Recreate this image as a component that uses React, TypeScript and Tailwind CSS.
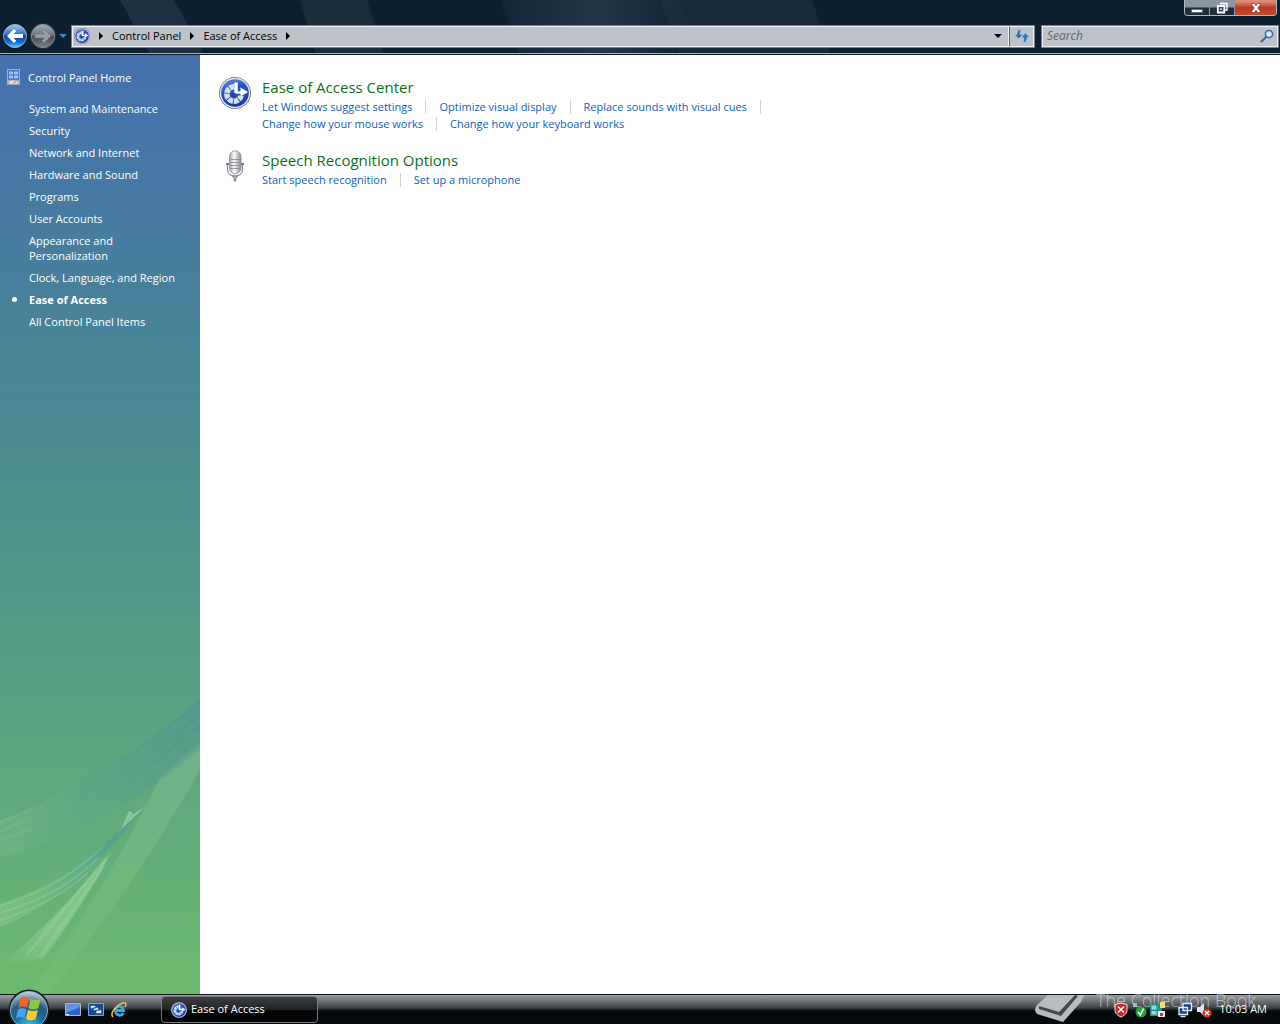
import React from 'react';

const sidebarItems = [
  'System and Maintenance',
  'Security',
  'Network and Internet',
  'Hardware and Sound',
  'Programs',
  'User Accounts',
  'Appearance and Personalization',
  'Clock, Language, and Region',
  'Ease of Access',
  'All Control Panel Items',
];

const EaseIcon: React.FC<{ className: string }> = ({ className }) => (
  <svg viewBox="0 0 32 32" className={className} aria-hidden="true">
    <defs>
      <linearGradient id="easeBall" x1="0" y1="0" x2="0.3" y2="1">
        <stop offset="0" stopColor="#6288e0" />
        <stop offset="0.45" stopColor="#2f55c4" />
        <stop offset="1" stopColor="#1d3aa4" />
      </linearGradient>
    </defs>
    <circle cx="16" cy="16" r="16" fill="#6d7280" />
    <circle cx="16" cy="16" r="15.2" fill="#dfe3ec" />
    <circle cx="16" cy="16" r="13.8" fill="url(#easeBall)" />
    {/* dial segments */}
    <circle cx="15" cy="17" r="7.2" fill="none" stroke="#cfe2f0" strokeWidth="5.6" strokeDasharray="4.8 0.855" transform="rotate(8 15 17)" />
    <path d="M15 17V5l8 2 5 4v7l-6 1z" fill="#2c51bf" />
    {/* hands */}
    <path d="M15.2 5.5h3.6v8.7h2.7v-3.6l7.5 4.4-7.5 4.5v-2.8h-5.2l-1.1-1z" fill="#fff" />
    <circle cx="14.6" cy="18" r="2.4" fill="#2447ad" />
  </svg>
);

const MicIcon: React.FC = () => (
  <svg viewBox="0 0 32 32" className="size-8" aria-hidden="true">
    <defs>
      <linearGradient id="micBody" x1="0" x2="1">
        <stop offset="0" stopColor="#a3a3ae" />
        <stop offset="0.4" stopColor="#fcfcff" />
        <stop offset="1" stopColor="#8b8b98" />
      </linearGradient>
    </defs>
    <path d="M8.5 13v6.5c0 4 3 6.500 7.500 6.500s7.500-2.500 7.500-6.500V13" fill="none" stroke="#8b8b97" strokeWidth="1.2" />
    <path d="M7 14h3M22 14h3" stroke="#5f5f6b" strokeWidth="1.5" />
    <path d="M13.5 26h5l-1.5 2v3h-2v-3z" fill="#b9b9c5" stroke="#6b6b78" strokeWidth=".7" />
    <rect x="10.5" y="0.8" width="11.5" height="23" rx="5.7" fill="url(#micBody)" stroke="#8b8b97" strokeWidth=".8" />
    <path d="M11 9.5h10M11 12.5h10M11 15.5h10M11 18.5h10" stroke="#85858f" strokeWidth=".8" />
  </svg>
);

const NavOrbs: React.FC = () => (
  <div className="flex items-center">
    <button aria-label="Back" className="flex size-7 items-center justify-center">
      <svg viewBox="0 0 28 28" className="size-7">
        <defs>
          <linearGradient id="backOrb" x1="0" y1="0" x2="0" y2="1">
            <stop offset="0" stopColor="#a9c6ef" />
            <stop offset="0.45" stopColor="#2f6cc4" />
            <stop offset="0.5" stopColor="#0d3f9a" />
            <stop offset="0.8" stopColor="#1c74d8" />
            <stop offset="1" stopColor="#5fd3fa" />
          </linearGradient>
        </defs>
        <circle cx="14" cy="14" r="13" fill="#0a1522" />
        <circle cx="14" cy="14" r="11.6" fill="url(#backOrb)" stroke="#a5b9d6" strokeWidth=".8" />
        <path d="M6 14l7-7 2.200 2.200L12.500 12H22v4h-9.500l2.700 2.800L13 21z" fill="#fff" />
      </svg>
    </button>
    <button aria-label="Forward" className="flex size-7 items-center justify-center">
      <svg viewBox="0 0 28 28" className="size-7">
        <defs>
          <linearGradient id="forwardOrb" x1="0" y1="0" x2="0" y2="1">
            <stop offset="0" stopColor="#a8adb4" />
            <stop offset="0.48" stopColor="#6c747c" />
            <stop offset="0.52" stopColor="#424b54" />
            <stop offset="1" stopColor="#77818a" />
          </linearGradient>
        </defs>
        <circle cx="14" cy="14" r="13" fill="#26323e" />
        <circle cx="14" cy="14" r="11.6" fill="url(#forwardOrb)" stroke="#8c959e" strokeWidth=".8" />
        <path d="M22 14l-7-7-2.200 2.200 2.700 2.800H6v4h9.500l-2.700 2.800L15 21z" fill="#98a0a6" stroke="#6d757c" strokeWidth=".6" />
      </svg>
    </button>
    <button aria-label="Recent pages" className="flex h-7 w-3 items-center justify-center">
      <svg viewBox="0 0 8 4" className="h-1 w-2"><path d="M0 0h8L4 4z" fill="#3f8bd0" /></svg>
    </button>
  </div>
);

const Crumb: React.FC = () => (
  <svg viewBox="0 0 4 8" className="mx-[9px] h-2 w-1 shrink-0" aria-hidden="true"><path d="M0 0l4 4-4 4z" fill="#000" /></svg>
);

const WindowButtons: React.FC = () => (
  <div className="mr-[3px] flex h-4 overflow-hidden rounded-b border border-t-0 border-[#aeb8c2]">
    <button aria-label="Minimize" className="flex w-[25px] items-center justify-center border-r border-[#8d99a5] bg-linear-to-b from-[#8b96a2] from-45% to-[#1f2c3a] to-55%">
      <svg viewBox="0 0 12 12" className="mt-1 size-3"><path d="M.5 5.5h11v3H.5z" fill="#fff" stroke="#465260" strokeWidth=".6" /></svg>
    </button>
    <button aria-label="Restore" className="flex w-[25px] items-center justify-center border-r border-[#8d99a5] bg-linear-to-b from-[#8b96a2] from-45% to-[#1f2c3a] to-55%">
      <svg viewBox="0 0 12 12" className="size-3">
        <path d="M4 1.5h7V8H8.500" fill="none" stroke="#fff" strokeWidth="1.4" />
        <path d="M1.8 4h6.500v6.500H1.800z" fill="#3c4856" stroke="#fff" strokeWidth="1.8" />
        <path d="M4.3 6.5h1.600v1.600H4.300z" fill="#fff" />
      </svg>
    </button>
    <button aria-label="Close" className="flex w-[41px] items-center justify-center bg-linear-to-b from-[#dc8a7a] from-10% via-[#bd3a22] via-50% to-[#c4492d]">
      <svg viewBox="0 0 12 12" className="size-3"><path d="M1 1.5h3.300L6 3.700l1.700-2.200H11L7.900 6l3.100 4.500H7.700L6 8.300l-1.700 2.200H1L4.100 6z" fill="#fff" stroke="#63302a" strokeWidth=".6" /></svg>
    </button>
  </div>
);

const TitleBar: React.FC = () => (
  <header className="relative flex h-[55px] flex-col border-b border-[#0a1a28] bg-[#0c2031]">
    <svg viewBox="0 0 1280 54" preserveAspectRatio="none" className="absolute inset-0 size-full" aria-hidden="true">
      <defs>
        <linearGradient id="glassFade" x1="0" x2="1">
          <stop offset="0" stopColor="#33445a" stopOpacity=".15" />
          <stop offset=".5" stopColor="#33445a" stopOpacity=".6" />
          <stop offset="1" stopColor="#33445a" stopOpacity="0" />
        </linearGradient>
      </defs>
      <path d="M120 0h54l30 54h-54z" fill="#33445a" opacity=".45" />
      <path d="M300 0h67l17 54h-68z" fill="#26394a" opacity=".5" />
      <path d="M500 0h180l20 54H520z" fill="url(#glassFade)" />
      <path d="M660 0h68l20 54h-68zM728 0h84l18 54h-82z" fill="#26394a" opacity=".4" />
    </svg>
    <div className="relative flex justify-end"><WindowButtons /></div>
    <div className="relative flex items-center gap-[2px] px-px pt-[6px]">
      <NavOrbs />
      <nav aria-label="Address" className="flex h-[23px] flex-1 border border-[#76808a] bg-[#bdc3c9]">
        <div className="flex min-w-0 flex-1 items-center border border-white/80 pl-px text-[11px] text-black">
          <EaseIcon className="size-4 shrink-0" />
          <Crumb />
          <a href="#control-panel">Control Panel</a>
          <Crumb />
          <a href="#ease">Ease of Access</a>
          <Crumb />
          <button aria-label="Previous locations" className="ml-auto flex h-full w-5 items-center justify-center">
            <svg viewBox="0 0 8 4" className="h-1 w-2"><path d="M0 0h8L4 4z" fill="#00001c" /></svg>
          </button>
        </div>
        <button aria-label="Refresh" className="flex w-[25px] items-center justify-center border border-white/80 border-l-[#59646f]">
          <svg viewBox="0 0 16 16" className="size-4">
            <path d="M7 1C4 1.5 2.800 4 3 6.500H.5L4.600 11l4.200-4.500H6.300C6.200 4.500 6.200 2.800 7 1z" fill="#2f74b8" stroke="#e8f2fb" strokeWidth=".3" />
            <path d="M9 15c3-.5 4.200-3 4-5.500h2.500L11.400 5 7.200 9.500h2.500C9.800 11.500 9.800 13.200 9 15z" fill="#2f74b8" stroke="#e8f2fb" strokeWidth=".3" />
          </svg>
        </button>
      </nav>
      <label className="ml-1 flex h-[23px] w-[238px] items-center border border-[#76808a] bg-[#bdc3c9] pl-[5px] shadow-[inset_0_0_0_1px_#e9edf0]">
        <input aria-label="Search" placeholder="Search" className="min-w-0 flex-1 bg-transparent text-[12px] italic text-black outline-none placeholder:text-[#62686e]" />
        <svg viewBox="0 0 14 14" className="mr-1 size-[14px]"><circle cx="9" cy="5" r="3.6" fill="#dce8f4" stroke="#3569b5" strokeWidth="1.5" /><path d="M6.3 7.800L1.500 12.500" stroke="#3569b5" strokeWidth="2" strokeLinecap="round" /></svg>
      </label>
    </div>
    <div className="absolute inset-x-0 bottom-0 h-px bg-[#a9b3bb]" />
  </header>
);

const SidebarWaves: React.FC = () => (
  <svg viewBox="0 0 200 304" className="absolute bottom-0 left-0 w-full" aria-hidden="true">
    <defs>
      <linearGradient id="upperSwoosh" x1="0" x2="1">
        <stop offset="0" stopColor="#8fd0a0" stopOpacity=".3" />
        <stop offset=".4" stopColor="#5aa28e" stopOpacity=".5" />
        <stop offset="1" stopColor="#4f9495" stopOpacity=".8" />
      </linearGradient>
      <linearGradient id="lowerSwoosh" x1="0" x2="1">
        <stop offset="0" stopColor="#a9dca4" stopOpacity=".35" />
        <stop offset=".45" stopColor="#6db48e" stopOpacity=".6" />
        <stop offset=".75" stopColor="#4d9f94" stopOpacity=".9" />
        <stop offset="1" stopColor="#57a896" />
      </linearGradient>
      <linearGradient id="wideBeam" x1="1" y1="0" x2=".2" y2="1">
        <stop offset="0" stopColor="#8cc4a0" stopOpacity=".4" />
        <stop offset=".5" stopColor="#8cc990" stopOpacity=".25" />
        <stop offset="1" stopColor="#8fd58f" stopOpacity=".1" />
      </linearGradient>
      <linearGradient id="beam" x1="1" y1="0" x2="0" y2="1">
        <stop offset="0" stopColor="#a7d6b1" stopOpacity=".5" />
        <stop offset=".6" stopColor="#a7dfaa" stopOpacity=".4" />
        <stop offset="1" stopColor="#a7dfaa" stopOpacity="0" />
      </linearGradient>
    </defs>
    <path d="M200 52L160 88Q108 196 30 304H48Q138 190 200 80Z" fill="url(#wideBeam)" />
    <path d="M0 131C70 105 135 65 200 10V58C145 108 70 150 0 168Z" fill="url(#upperSwoosh)" opacity=".5" />
    <g fill="none" stroke="url(#upperSwoosh)" strokeWidth="3" opacity=".5">
      <path d="M0 132C70 106 135 65 200 12" />
      <path d="M0 141C75 115 140 75 200 24" />
      <path d="M0 150C75 126 145 84 200 36" />
    </g>
    <path d="M0 214C62 194 95 163 145 118C108 160 65 212 0 237Z" fill="url(#lowerSwoosh)" opacity=".8" />
    <g fill="none" stroke="#a9dcaf" strokeWidth="1.5" opacity=".3">
      <path d="M0 216C52 200 80 178 105 155" />
      <path d="M0 223C52 207 78 188 98 168" />
      <path d="M0 230C48 214 68 201 88 182" />
    </g>
    <path d="M129 121l4 2-13 18zM146 116l-14 9-10 13z" fill="#a8d8af" opacity=".6" />
    <path d="M112 161C80 200 45 238 0 276L44 268C65 240 92 200 112 161Z" fill="url(#beam)" />
    <path d="M106 168L26 266M104 176L40 267" fill="none" stroke="#b4e0b5" strokeWidth="3" opacity=".2" />
  </svg>
);

const Sidebar: React.FC = () => (
  <aside className="relative w-[200px] shrink-0 bg-linear-to-b from-[#446fac] via-[#4b8990] via-40% to-[#6eb96e]">
    <SidebarWaves />
    <div className="relative pl-[7px] pr-3 pt-[14px] text-[11px] leading-[15px] text-white">
      <a href="#home" className="flex items-center gap-2">
        <svg viewBox="0 0 13 16" className="h-4 w-[13px]" aria-hidden="true">
          <path d="M0 0h13v16H0z" fill="#8db0ea" />
          <path d="M1 1h11v10H1z" fill="#4c76d0" />
          <path d="M2.5 3h3v2h-3zM7.500 3h3v2h-3zM2.500 7h3v2h-3zM7.500 7h3v2h-3z" fill="#7fa7ee" stroke="#c4d9ff" strokeWidth=".8" />
          <path d="M1 15c0-5 11-5 11 0z" fill="#eee4d4" stroke="#ad9b83" strokeWidth=".7" />
          <path d="M6.5 14l2-2" stroke="#a05233" />
        </svg>
        Control Panel Home
      </a>
      <ul className="mt-4 flex flex-col gap-[7px] pl-[22px]">
        {sidebarItems.map((item) => (
          <li key={item} className="relative">
            {item === 'Ease of Access' && <span className="absolute -left-[17px] top-[5px] size-[5px] rounded-full bg-white" />}
            <a href="#category" className={item === 'Ease of Access' ? 'font-bold' : ''}>{item}</a>
          </li>
        ))}
      </ul>
    </div>
  </aside>
);

interface CategoryProps {
  title: string;
  icon: React.ReactNode;
  rows: string[][];
}

const Category: React.FC<CategoryProps> = ({ title, icon, rows }) => (
  <section className="flex gap-[11px]">
    <div className="w-8 shrink-0">{icon}</div>
    <div>
      <h2 className="text-[15px] leading-[21px] text-[#0d6f1c]"><a href="#title">{title}</a></h2>
      {rows.map((row, r) => (
        <div key={row[0]} className="flex h-[17px] items-center text-[11px] leading-[15px] text-[#0b5fc5]">
          {row.map((link, i) => (
            <React.Fragment key={link}>
              <a href="#task" className="whitespace-nowrap">{link}</a>
              {(i < row.length - 1 || r < rows.length - 1) && <span className="mx-[13px] h-[14px] w-px bg-[#cfd3d8]" />}
            </React.Fragment>
          ))}
        </div>
      ))}
    </div>
  </section>
);

const StartOrb: React.FC = () => (
  <button aria-label="Start" className="ml-2 size-[42px] shrink-0">
    <svg viewBox="0 0 42 42" className="size-[42px]">
      <defs>
        <radialGradient id="startBall" cx=".5" cy="1" r="1">
          <stop offset="0" stopColor="#3fd3f2" />
          <stop offset=".45" stopColor="#126a9a" />
          <stop offset=".68" stopColor="#2b5a80" />
          <stop offset="1" stopColor="#cad8e4" />
        </radialGradient>
      </defs>
      <circle cx="21" cy="21" r="20.5" fill="#141d28" />
      <circle cx="21" cy="21" r="18.5" fill="url(#startBall)" stroke="#8baabf" />
      <path d="M12.5 9.500c3-2.300 6-1.800 8.800-.5l-2.200 9.400c-2.700-1.200-5.300-1.500-8.600.3z" fill="#ef6429" />
      <path d="M22.5 9.800c3.200 1.500 6.800 1.600 10.200 0l-2.400 9.400c-3.200 1.700-6.600 1.500-9.900 0z" fill="#8fc63f" />
      <path d="M10 20.500c2.800-1.700 5.500-1.500 8.600-.3l-2.200 9c-2.600-1.400-5.500-1.600-8.600.2z" fill="#4f9ff0" />
      <path d="M20 20.800c3.200 1.500 6.500 1.600 9.900.2l-2.300 9.200c-3 1.500-6.400 1.400-9.700-.2z" fill="#fdc92d" />
    </svg>
  </button>
);

const Taskbar: React.FC = () => (
  <footer className="relative flex h-[30px] shrink-0 items-center border-t border-[#10151c] bg-linear-to-b from-[#9da0a2] via-[#3e4144] via-45% to-[#06090c] to-55% text-[11px] text-white">
    <StartOrb />
    <div className="ml-[15px] flex items-center gap-[7px]">
      <button aria-label="Show desktop">
        <svg viewBox="0 0 16 13" className="h-[13px] w-4"><path d="M.5.5h15v12H.5z" fill="#2f62c8" stroke="#a6b8ca" /><path d="M1 1h14v3L1 10z" fill="#5f92e6" /><path d="M1 11h3v1H1z" fill="#d9ecfb" /></svg>
      </button>
      <button aria-label="Switch windows">
        <svg viewBox="0 0 16 13" className="h-[13px] w-4"><path d="M.5.5h15v12H.5z" fill="#174a91" stroke="#6eaadb" /><path d="M2.5 2.500h5v3h-5zM5.500 4.500h5v3h-5zM8 7h5.500v3.500H8z" fill="#d9ecfb" stroke="#174a91" strokeWidth=".6" /></svg>
      </button>
      <button aria-label="Internet Explorer">
        <svg viewBox="0 0 16 16" className="size-4"><path d="M12.5 11c-2 3.500-8 3-8-2.500S12 3 12.500 8.500H5" fill="none" stroke="#36a5ef" strokeWidth="2.8" /><path d="M2 15C-2 11 8 0 14.500 1c1 1 .3 2.500-.5 4" fill="none" stroke="#f8bc32" strokeWidth="1.5" /></svg>
      </button>
    </div>
    <button className="ml-[34px] flex h-[27px] w-[157px] items-center gap-1 rounded border border-[#777b7e] bg-linear-to-b from-[#3b3d3e] from-5% via-[#202224] via-50% to-[#030405] to-55% pl-[9px]">
      <EaseIcon className="size-4" />
      Ease of Access
    </button>
    <div className="absolute bottom-0 right-6 flex items-end" aria-hidden="true">
      <svg viewBox="0 0 50 30" className="mr-3 h-[30px] w-[50px]">
        <path d="M14 1H50L47 8 29 28 3 20Q-1 16 3 11z" fill="#b9bbbc" />
        <path d="M5 12l20 6L41 1l3 1-17 20L5 15z" fill="#46494b" />
      </svg>
      <span className="mb-3 whitespace-nowrap text-[18px] font-light leading-6 text-white/50">The Collection Book</span>
    </div>
    <div className="relative ml-auto flex items-center gap-[3px] pr-[13px]">
      <svg viewBox="0 0 14 16" className="h-4 w-[14px]" aria-hidden="true"><path d="M7 1l6 1.500v5c0 4-2.500 6-6 7.500-3.500-1.500-6-3.500-6-7.500v-5z" fill="#c9282b" stroke="#eee" /><path d="M4 4.500l6 6M10 4.500l-6 6" stroke="#fff" strokeWidth="1.6" /></svg>
      <svg viewBox="0 0 16 16" className="size-4" aria-hidden="true"><path d="M2 1h4v4H2z" fill="#aeb6c9" /><circle cx="10" cy="10" r="5.5" fill="#23a638" /><path d="M7 10l2.500 3L12.500 6.500" fill="none" stroke="#fff" strokeWidth="1.6" /></svg>
      <svg viewBox="0 0 16 16" className="size-4" aria-hidden="true"><path d="M0 2h12v12H0z" fill="#1c9395" /><path d="M1.5 3.500h5v4h-5zM1.500 9h5v3.500h-5z" fill="#9bd9cc" /><path d="M10 0h5v6h-5z" fill="#f4dc73" /><path d="M8 9h7v6H8z" fill="#e9e9e9" /><path d="M10 11h3v3h-3z" fill="#bd3b24" /></svg>
      <svg viewBox="0 0 16 16" className="ml-2 size-4" aria-hidden="true"><path d="M6 1.500h8.500v7H6zM2 5.500h8.500v7H2z" fill="#173f82" stroke="#e6f2fb" strokeWidth="1.3" /><path d="M3.500 14.500h5" stroke="#e6f2fb" strokeWidth="1.3" /></svg>
      <svg viewBox="0 0 16 16" className="size-4" aria-hidden="true"><path d="M1 5h3l4-4v13l-4-4H1z" fill="#e5e7ea" /><circle cx="11" cy="11" r="4.5" fill="#dc2e29" /><path d="M9 9l4 4M13 9l-4 4" stroke="#fff" strokeWidth="1.5" /></svg>
      <time className="ml-1">10:03 AM</time>
    </div>
  </footer>
);

export default function App() {
  return (
    <div className="flex min-h-screen flex-col overflow-hidden bg-white font-['Open_Sans','Noto_Sans',sans-serif]">
      <TitleBar />
      <div className="flex flex-1">
        <Sidebar />
        <main className="flex flex-1 flex-col gap-[18px] pl-[19px] pt-[22px]">
          <Category
            title="Ease of Access Center"
            icon={<EaseIcon className="size-8" />}
            rows={[
              ['Let Windows suggest settings', 'Optimize visual display', 'Replace sounds with visual cues'],
              ['Change how your mouse works', 'Change how your keyboard works'],
            ]}
          />
          <Category
            title="Speech Recognition Options"
            icon={<MicIcon />}
            rows={[['Start speech recognition', 'Set up a microphone']]}
          />
        </main>
      </div>
      <Taskbar />
    </div>
  );
}
